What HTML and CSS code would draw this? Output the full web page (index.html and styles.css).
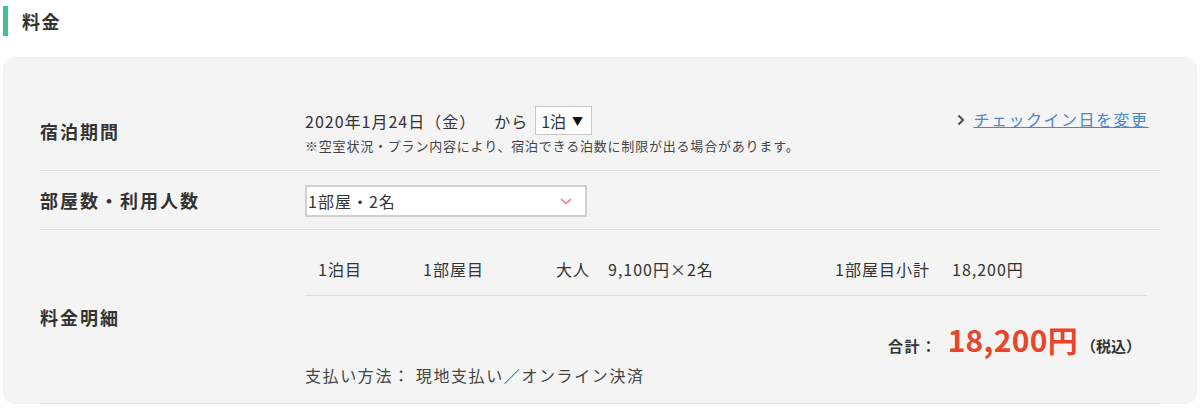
FILE: index.html
```html
<!DOCTYPE html>
<html lang="ja">
<head>
<meta charset="utf-8">
<link rel="stylesheet" href="styles.css">
</head>
<body>
<h2 class="heading">料金</h2>
<div class="card">
  <div class="row row-stay">
    <div class="label">宿泊期間</div>
    <div class="value">
      <div class="stay-line">
        <div class="stay-date">
          <span>2020年1月24日（金）</span>
          <span class="from">から</span>
          <span class="nights">1泊 <span class="tri">▼</span></span>
        </div>
        <a class="change-link" href="#"><svg class="chev" width="8" height="12" viewBox="0 0 8 12"><path d="M1.5 1.5 L6 6 L1.5 10.5" fill="none" stroke="#555" stroke-width="2.2"/></svg><span class="link-text">チェックイン日を変更</span></a>
      </div>
      <div class="note">※空室状況・プラン内容により、宿泊できる泊数に制限が出る場合があります。</div>
    </div>
  </div>
  <div class="row row-room">
    <div class="label">部屋数・利用人数</div>
    <div class="value">
      <div class="room-select">
        <span>1部屋・2名</span>
        <svg class="down" width="12" height="7" viewBox="0 0 12 7"><path d="M1 1 L6 5.5 L11 1" fill="none" stroke="#f38aa0" stroke-width="1.8"/></svg>
      </div>
    </div>
  </div>
  <div class="row row-price">
    <div class="label">料金明細</div>
    <div class="value">
      <div class="detail">
        <span class="d-night">1泊目</span>
        <span class="d-room">1部屋目</span>
        <span class="d-adult">大人</span>
        <span class="d-unit">9,100円×2名</span>
        <span class="d-sub">1部屋目小計</span>
        <span class="d-subval">18,200円</span>
      </div>
      <div class="total">
        <span class="total-label">合計：</span>
        <span class="total-amount">18,200円</span>
        <span class="tax">（税込）</span>
      </div>
      <div class="pay">支払い方法： 現地支払い／オンライン決済</div>
    </div>
  </div>
</div>
</body>
</html>
```

FILE: styles.css
```css
* { box-sizing: border-box; }
body {
  margin: 0;
  background: #fff;
  color: #333;
  font-family: "Noto Sans CJK JP", "Noto Sans", sans-serif;
  font-size: 16px;
  letter-spacing: 1px;
}
.heading {
  margin: 6px 0 0 3px;
  height: 30px;
  border-left: 5px solid #3cc28e;
  padding-left: 14px;
  font-size: 18px;
  font-weight: bold;
  line-height: 30px;
  color: #333;
  letter-spacing: 1.5px;
}
.card {
  margin: 21px 3px 0 3px;
  background: #f4f4f4;
  border-radius: 12px;
  padding: 35px 37px 0 37px;
}
.row {
  display: grid;
  grid-template-columns: 265px 1fr;
  border-bottom: 1px solid #dcdcdc;
}
.label {
  align-self: center;
  font-weight: bold;
  font-size: 18px;
  letter-spacing: 2px;
  color: #333;
}
.value {
  padding-right: 13px;
}
.row-stay { height: 79px; padding-top: 14px; }
.row-stay .label { align-self: start; padding-top: 12px; }
.stay-line {
  display: flex;
  justify-content: space-between;
  align-items: center;
  height: 29px;
}
.stay-date {
  display: flex;
  align-items: center;
}
.from { margin-left: 18px; margin-right: 7px; }
.nights {
  display: inline-flex;
  align-items: center;
  height: 29px;
  padding: 0 8px 0 5px;
  background: #fff;
  border: 1px solid #c8c8c8;
  letter-spacing: 0;
}
.tri { font-size: 11px; margin-left: 6px; color: #111; }
.change-link {
  display: flex;
  align-items: center;
  color: #4a86c8;
  text-decoration: none;
  margin-top: -3px;
  letter-spacing: 1.5px;
  margin-right: -1.5px;
}
.chev { margin-right: 8px; margin-top: 1px; }
.link-text { text-decoration: underline; }
.note {
  font-size: 13px;
  letter-spacing: 0.8px;
  color: #444;
  margin-top: 2px;
  line-height: 17px;
}
.row-room { height: 59px; align-items: center; }
.room-select {
  width: 282px;
  height: 32px;
  background: #fff;
  border: 2px solid #d0d0d0;
  display: flex;
  align-items: center;
  justify-content: space-between;
  padding: 0 13px 0 1px;
  margin-top: 1px;
}
.down { margin-top: 1px; }
.row-price { height: 174px; }
.detail {
  display: flex;
  align-items: center;
  height: 66px;
  border-bottom: 1px solid #dcdcdc;
  padding-top: 12px;
}
.detail span { white-space: nowrap; }
.d-night { margin-left: 13px; width: 105px; }
.d-room { width: 133px; }
.d-adult { width: 52px; }
.d-unit { width: 227px; }
.d-sub { width: 117px; }
.total {
  display: flex;
  justify-content: flex-end;
  align-items: baseline;
  padding-top: 28px;
  padding-right: 6px;
  height: 68px;
}
.total-label { font-weight: bold; font-size: 15px; margin-right: 10px; letter-spacing: 1.5px; }
.total-amount { color: #e8452d; font-weight: bold; font-size: 30px; line-height: 1; letter-spacing: 0.3px; }
.tax { font-weight: bold; font-size: 15px; margin-left: 3px; letter-spacing: 0; }
.pay { margin-top: 0; line-height: 22px; color: #444; letter-spacing: 1.6px; }
```
